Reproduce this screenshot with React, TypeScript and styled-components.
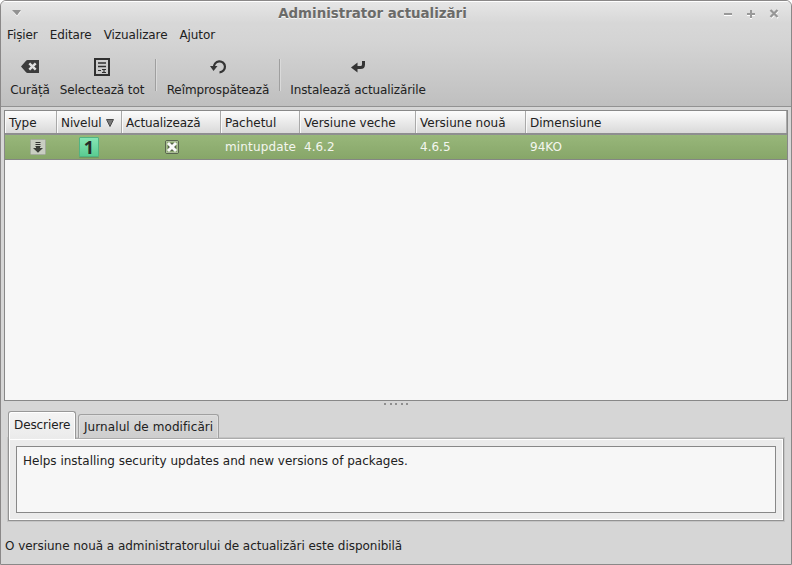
import React from 'react';
import styled, { createGlobalStyle } from 'styled-components';

const Global = createGlobalStyle`
  * { box-sizing: border-box; }
  body { margin: 0; background: #fff; }
`;

const Window = styled.div`
  width: 792px;
  height: 565px;
  display: flex;
  flex-direction: column;
  background: #d6d6d6;
  border: 1px solid #8a8888;
  border-radius: 6px 6px 0 0;
  overflow: hidden;
  font: 12px/16px 'DejaVu Sans', sans-serif;
  color: #212121;
  white-space: nowrap;
  cursor: default;
  svg { display: block; flex: none; }
`;

const TitleBar = styled.header`
  height: 25px;
  display: grid;
  grid-template-columns: 80px 1fr 80px;
  border-top: 1px solid #fff;
  background: linear-gradient(#e6e6e6, #d7d7d7 90%);
`;

const Title = styled.h1`
  margin: 0;
  padding-right: 47px;
  padding-top: 4px;
  text-align: center;
  font-size: 13.4px;
  line-height: 16px;
  color: #6b6b69;
  text-shadow: 0 1px #f5f5f5;
`;

const MenuArrow = styled.div`
  padding: 8px 0 0 11px;
`;

const WindowButtons = styled.div`
  padding: 6px 0 0 12px;
`;

const TopBars = styled.div`
  height: 81px;
  background: linear-gradient(#d7d7d7, #d4d4d4 20%, #bfbfbf);
  border-bottom: 1px solid #929292;
`;

const MenuBar = styled.nav`
  display: flex;
  gap: 12px;
  height: 21px;
  padding: 1px 0 0 6px;
  letter-spacing: -0.1px;
`;

const Toolbar = styled.div`
  display: flex;
  height: 59px;
  padding-left: 9px;
  letter-spacing: -0.1px;
`;

const ToolButton = styled.div<{ $width: number; $gap?: number }>`
  width: ${p => p.$width}px;
  margin-left: ${p => p.$gap ?? 0}px;
  display: flex;
  flex-direction: column;
  align-items: center;
  padding-top: 11px;
  svg { margin-bottom: 6px; }
`;

const Separator = styled.div<{ $gap: number }>`
  width: 2px;
  height: 32px;
  margin: 12px 0 0 ${p => p.$gap}px;
  background: linear-gradient(90deg, #9f9f9f 50%, #dadada 50%);
`;

const Table = styled.section`
  height: 291px;
  margin: 3px 3px 0;
  background: #f7f7f7;
  border: 1px solid #888;
`;

const columns = '52px 65px 99px 79px 116px 110px 1fr';

const HeaderRow = styled.div`
  display: grid;
  grid-template-columns: ${columns};
  height: 24px;
  border-bottom: 2px solid #8e8e90;
`;

const HeaderCell = styled.div<{ $spacing?: number }>`
  display: flex;
  gap: 5px;
  padding: 4px 0 0 4px;
  letter-spacing: ${p => p.$spacing ?? 0}px;
  background: linear-gradient(#fcfcfc, #d9d9d9);
  border-right: 1px solid #a9a9a9;
  box-shadow: inset 1px 0 #fafafa;
  svg { margin-top: 4px; }
`;

const Row = styled.div`
  display: grid;
  grid-template-columns: ${columns};
  height: 25px;
  background: linear-gradient(#98b77a, #87a669);
  border-bottom: 1px solid #848683;
  color: #f4f6ef;
`;

const Cell = styled.div<{ $indent?: number; $top?: number; $spacing?: number }>`
  padding: ${p => p.$top ?? 4}px 0 0 ${p => p.$indent ?? 4}px;
  letter-spacing: ${p => p.$spacing ?? 0}px;
`;

const Level = styled.div`
  width: 20px;
  height: 20px;
  border: 1px solid #51b483;
  border-radius: 1px;
  background: linear-gradient(#86e5b4, #5acb91);
  box-shadow: 0 1px #71965f;
  color: #262b28;
  font: bold 18px/19px 'Open Sans', sans-serif;
  text-align: center;
`;

const Grip = styled.div`
  height: 10px;
  display: flex;
  justify-content: center;
  gap: 3.5px;
  padding-top: 2px;
`;

const GripDot = styled.i`
  width: 2px;
  height: 2px;
  background: #8e8e8e;
`;

const Tabs = styled.div`
  display: flex;
  align-items: flex-end;
  height: 28px;
  margin: 0 7px -1px;
  gap: 2px;
`;

const Tab = styled.div<{ $active?: boolean }>`
  position: relative;
  z-index: ${p => (p.$active ? 1 : 0)};
  width: ${p => (p.$active ? 68 : 141)}px;
  height: ${p => (p.$active ? 28 : 24)}px;
  margin-bottom: ${p => (p.$active ? 0 : 1)}px;
  padding: ${p => (p.$active ? '5px 0 0 5px' : '4px 0 0 5px')};
  letter-spacing: ${p => (p.$active ? -0.1 : 0.08)}px;
  border: 1px solid ${p => (p.$active ? '#989898' : '#a0a0a0')};
  border-bottom: 0;
  border-radius: 3px 3px 0 0;
  background: ${p => (p.$active ? 'linear-gradient(#f4f4f4, #ebebeb)' : 'linear-gradient(#d9d9d9, #cecece)')};
  box-shadow: inset 1px 1px ${p => (p.$active ? '#fff' : '#dfdfdf')}, inset -1px 0 ${p => (p.$active ? '#fff' : '#dfdfdf')};
`;

const Panel = styled.div`
  height: 83px;
  margin: 0 7px;
  padding: 7px;
  border: 1px solid #929292;
  border-top-color: #acacac;
  background: #ebebeb;
  box-shadow: inset 0 0 0 1px #fff, 0 0 0 1px #c4c4c4;
`;

const Description = styled.div`
  height: 67px;
  padding: 6px;
  background: #f7f7f7;
  border: 1px solid #888;
`;

const Status = styled.footer`
  padding: 17px 0 0 4px;
  letter-spacing: -0.035px;
`;

const ClearIcon = () => (
  <svg width="18" height="18" viewBox="0 0 18 18">
    <path d="M0 8.500 5 2.700Q5.600 2 6.500 2H18V15H6.500Q5.600 15 5 14.300Z" fill="#3c3c3c" />
    <path d="m8.300 5.300 6.400 6.400m0-6.400-6.400 6.400" stroke="#dedede" strokeWidth="2.400" />
  </svg>
);

const SelectAllIcon = () => (
  <svg width="18" height="18" viewBox="0 0 18 18">
    <rect x="2" y="1" width="14" height="16" fill="none" stroke="#303030" strokeWidth="2" />
    <path d="M5 5h8M5 8.500h8" stroke="#303030" strokeWidth="1.600" />
    <path d="M5 12.500h3M9 11.500h4M9 14.500h4M11 11v4" stroke="#303030" strokeWidth="1.100" />
  </svg>
);

const RefreshIcon = () => (
  <svg width="18" height="18" viewBox="0 0 18 18">
    <path d="M5 9.500A5.500 5.500 0 1 1 10.500 14.300" fill="none" stroke="#353535" strokeWidth="2.200" />
    <path d="M1 8h7.500l-4 5Z" fill="#353535" />
  </svg>
);

const InstallIcon = () => (
  <svg width="18" height="18" viewBox="0 0 18 18">
    <path d="M14.500 3v3.500Q14.500 9.500 11.500 9.500H7" fill="none" stroke="#353535" strokeWidth="3" />
    <path d="M2 9.500 8.500 4.500v10Z" fill="#353535" />
  </svg>
);

const DownloadIcon = () => (
  <svg width="16" height="16" viewBox="0 0 16 16">
    <rect x=".5" y=".5" width="15" height="15" rx="1" fill="#c9cec2" stroke="#a4ab9d" />
    <path d="M5.500 3.500h5M5.500 5.500h5M5.500 7.500h5" stroke="#333" />
    <path d="M6 7.500h4V9h3l-5 4.700L3 9h3Z" fill="#3c3f3a" />
  </svg>
);

const CheckedBox = () => (
  <svg width="14" height="14" viewBox="0 0 14 14">
    <rect x=".5" y=".5" width="13" height="13" rx="1.500" fill="#8ba76f" stroke="#59654f" />
    <rect x="1.500" y="1.500" width="11" height="11" fill="none" stroke="#a9bc95" />
    <rect x="3" y="3" width="8" height="8" fill="#55634a" />
    <path d="m4 4 6 6m0-6-6 6" stroke="#fafafa" strokeWidth="3" strokeLinecap="square" />
  </svg>
);

export default function App() {
  return (
    <>
      <Global />
      <Window>
        <TitleBar>
          <MenuArrow>
            <svg width="10" height="7"><path d="M1 1.500h8L5 6.500Z" fill="#fff" /><path d="M0 0h9L5 5.500Z" fill="#929292" /></svg>
          </MenuArrow>
          <Title>Administrator actualizări</Title>
          <WindowButtons>
            <svg width="58" height="13">
              <path d="M1 7h8M24 7h8M28 3v8M48 3l7 7m0-7-7 7" stroke="#fff" strokeWidth="2" />
              <path d="M1 6h8M24 6h8M28 2v8" stroke="#999" strokeWidth="2" />
              <path d="m47.500 2 7 7m0-7-7 7" stroke="#969696" strokeWidth="2.300" />
            </svg>
          </WindowButtons>
        </TitleBar>
        <TopBars>
          <MenuBar>
            <span>Fișier</span><span>Editare</span><span>Vizualizare</span><span>Ajutor</span>
          </MenuBar>
          <Toolbar>
            <ToolButton $width={40}><ClearIcon />Curăță</ToolButton>
            <ToolButton $width={84} $gap={10}><SelectAllIcon />Selectează tot</ToolButton>
            <Separator $gap={11} />
            <ToolButton $width={102} $gap={10}><RefreshIcon />Reîmprospătează</ToolButton>
            <Separator $gap={10} />
            <ToolButton $width={134} $gap={10}><InstallIcon />Instalează actualizările</ToolButton>
          </Toolbar>
        </TopBars>
        <Table>
          <HeaderRow>
            <HeaderCell>Type</HeaderCell>
            <HeaderCell $spacing={-0.1}>
              Nivelul
              <svg width="8" height="8"><path d="M.5.500h7L4 7.500Z" fill="#777" stroke="#4a4a4a" /></svg>
            </HeaderCell>
            <HeaderCell $spacing={-0.1}>Actualizează</HeaderCell>
            <HeaderCell>Pachetul</HeaderCell>
            <HeaderCell>Versiune veche</HeaderCell>
            <HeaderCell>Versiune nouă</HeaderCell>
            <HeaderCell>Dimensiune</HeaderCell>
          </HeaderRow>
          <Row>
            <Cell $indent={25}><DownloadIcon /></Cell>
            <Cell $indent={22} $top={2}><Level>1</Level></Cell>
            <Cell $indent={43} $top={5}><CheckedBox /></Cell>
            <Cell $spacing={0.15}>mintupdate</Cell>
            <Cell>4.6.2</Cell>
            <Cell>4.6.5</Cell>
            <Cell>94KO</Cell>
          </Row>
        </Table>
        <Grip><GripDot /><GripDot /><GripDot /><GripDot /><GripDot /></Grip>
        <Tabs>
          <Tab $active>Descriere</Tab>
          <Tab>Jurnalul de modificări</Tab>
        </Tabs>
        <Panel>
          <Description>Helps installing security updates and new versions of packages.</Description>
        </Panel>
        <Status>O versiune nouă a administratorului de actualizări este disponibilă</Status>
      </Window>
    </>
  );
}
